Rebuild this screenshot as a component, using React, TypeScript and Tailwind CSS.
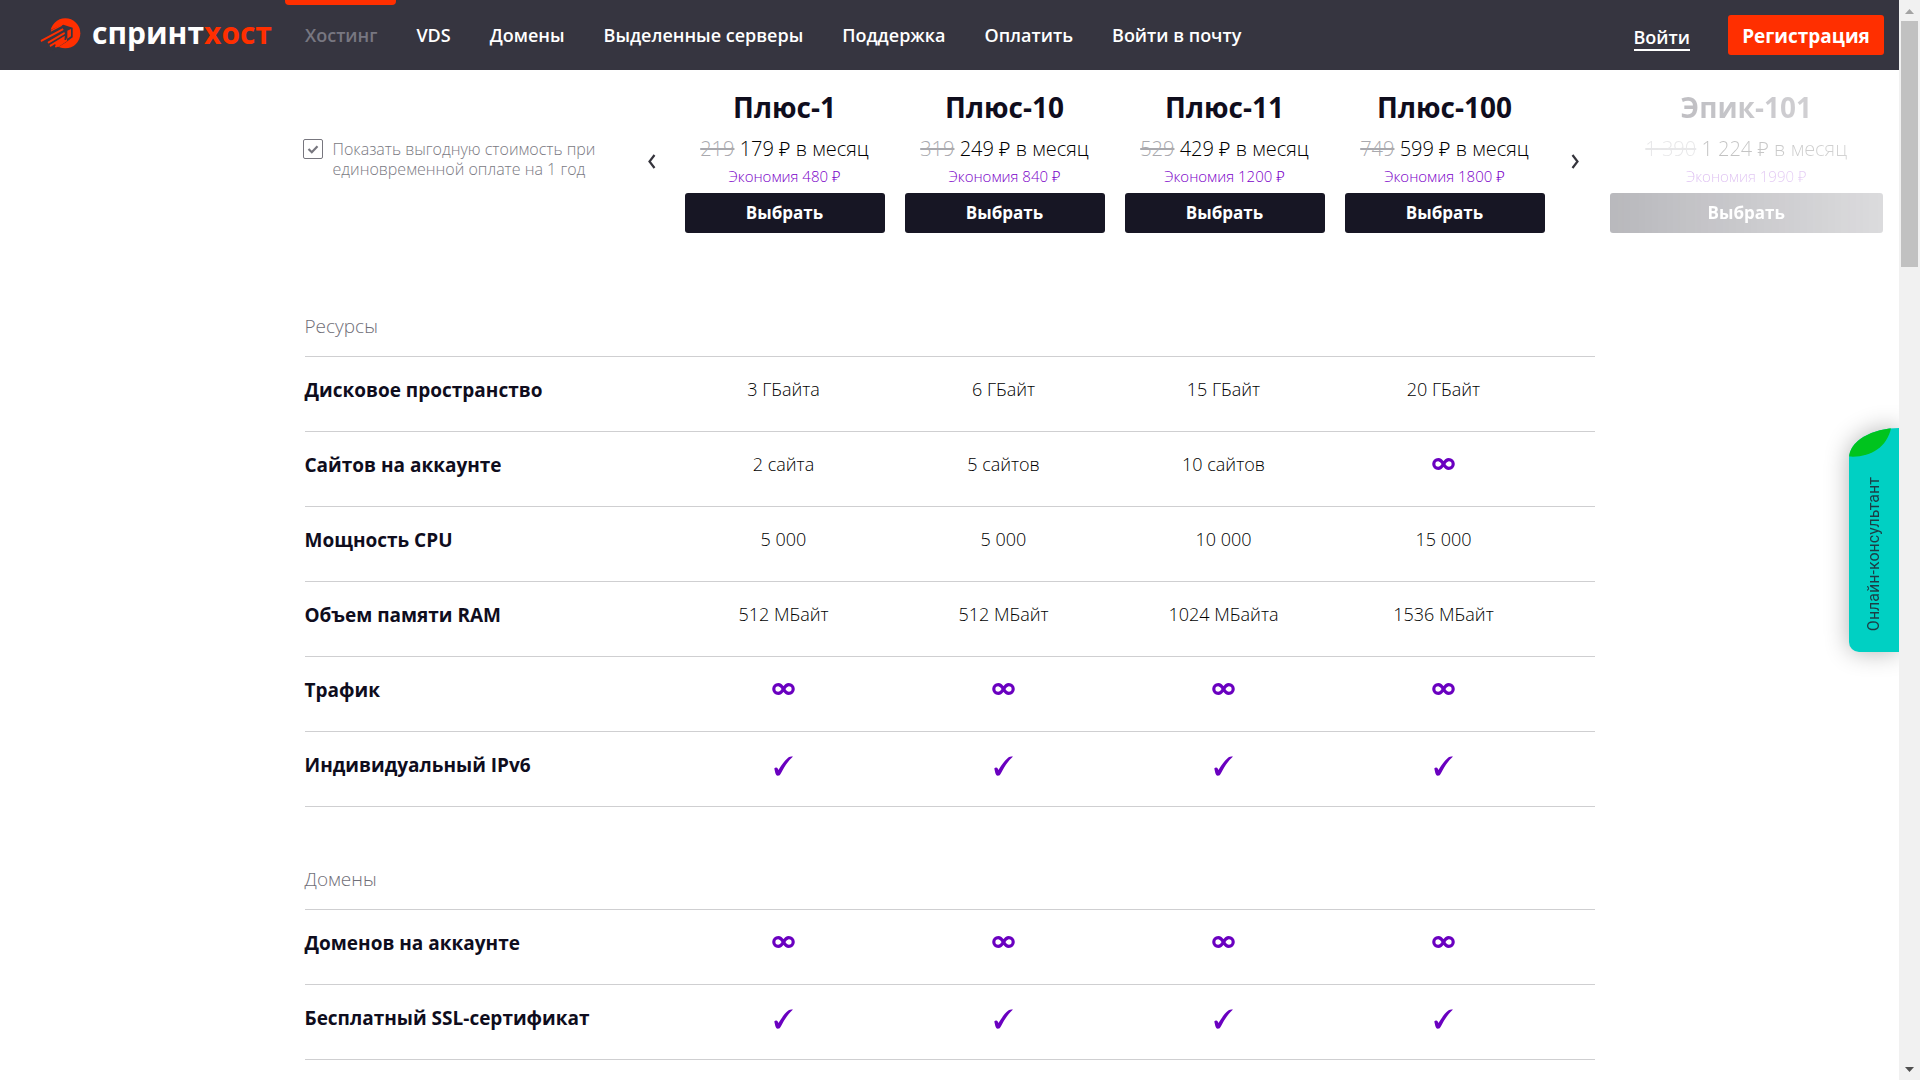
import type { ReactNode } from "react";
import { useState } from "react";

type Plan = {
  name: string;
  oldPrice: string;
  price: string;
  saving: string;
};

type Row = {
  label: string;
  values: string[];
};

type Section = {
  title: string;
  rows: Row[];
};

const navItems = [
  "Хостинг",
  "VDS",
  "Домены",
  "Выделенные серверы",
  "Поддержка",
  "Оплатить",
  "Войти в почту",
];

const plans: Plan[] = [
  { name: "Плюс-1", oldPrice: "219", price: "179", saving: "480" },
  { name: "Плюс-10", oldPrice: "319", price: "249", saving: "840" },
  { name: "Плюс-11", oldPrice: "529", price: "429", saving: "1200" },
  { name: "Плюс-100", oldPrice: "749", price: "599", saving: "1800" },
];

const nextPlan: Plan = { name: "Эпик-101", oldPrice: "1 390", price: "1 224", saving: "1990" };

const infinite = ["inf", "inf", "inf", "inf"];
const included = ["yes", "yes", "yes", "yes"];

const sections: Section[] = [
  {
    title: "Ресурсы",
    rows: [
      { label: "Дисковое пространство", values: ["3 ГБайта", "6 ГБайт", "15 ГБайт", "20 ГБайт"] },
      { label: "Сайтов на аккаунте", values: ["2 сайта", "5 сайтов", "10 сайтов", "inf"] },
      { label: "Мощность CPU", values: ["5 000", "5 000", "10 000", "15 000"] },
      {
        label: "Объем памяти RAM",
        values: ["512 МБайт", "512 МБайт", "1024 МБайта", "1536 МБайт"],
      },
      { label: "Трафик", values: infinite },
      { label: "Индивидуальный IPv6", values: included },
    ],
  },
  {
    title: "Домены",
    rows: [
      { label: "Доменов на аккаунте", values: infinite },
      { label: "Бесплатный SSL-сертификат", values: included },
    ],
  },
];

export default function App() {
  return (
    <div className="flex h-screen overflow-hidden bg-white font-['Open_Sans','Noto_Sans',sans-serif] text-[#0f0d1d]">
      <div className="min-w-0 flex-1 overflow-hidden">
        <Header />
        <main>
          <PlanPicker />
          {sections.map((section) => (
            <FeatureTable key={section.title} section={section} />
          ))}
        </main>
      </div>
      <PageScrollbar />
      <ConsultantTab />
    </div>
  );
}

function Header() {
  return (
    <header className="flex h-[70px] items-start bg-[#363540] text-white">
      <a href="#" className="ml-[38px] flex h-[66px] w-[247px] shrink-0 items-center gap-2">
        <Logo />
        <span className="text-[30px] leading-none font-bold">
          спринт<span className="text-[#ff2f00]">хост</span>
        </span>
      </a>
      <nav className="flex">
        {navItems.map((item, index) => (
          <a
            key={item}
            href="#"
            className={
              index === 0
                ? "relative pt-[21px] pr-[19px] pl-5 text-lg leading-7 font-semibold whitespace-nowrap text-[#787781]"
                : "relative pt-[21px] pr-[19px] pl-5 text-lg leading-7 font-semibold whitespace-nowrap"
            }
          >
            {index === 0 && (
              <span className="absolute inset-x-0 top-0 h-[5px] rounded-b bg-[#ff2f00]" />
            )}
            {item}
          </a>
        ))}
      </nav>
      <div className="mr-[15px] ml-auto flex items-start gap-[38px] pt-[15px]">
        <a href="#" className="mt-[10px] border-b-2 border-white text-lg leading-6 font-semibold">
          Войти
        </a>
        <a
          href="#"
          className="h-10 w-[156px] rounded-[3px] bg-[#ff2f00] text-center text-[19px] leading-[42px] font-bold"
        >
          Регистрация
        </a>
      </div>
    </header>
  );
}

function PlanPicker() {
  const [yearly, setYearly] = useState(true);

  return (
    <section className="grid grid-cols-[1fr_1290px_1fr] pt-[21px]">
      <div />
      <div className="-ml-0.5 flex">
        <label className="mt-12 flex w-[343px] shrink-0 items-start gap-[10px] text-base leading-5 font-light text-[#7a7982]">
          <span className="relative block size-5 shrink-0">
            <input
              type="checkbox"
              checked={yearly}
              onChange={(event) => setYearly(event.target.checked)}
              className="block size-5 appearance-none rounded-[2px] border border-[#77767e]"
            />
            {yearly && (
              <svg viewBox="0 0 20 20" className="pointer-events-none absolute inset-0 size-5">
                <path d="M5.500 10l3.300 3.200 5.700-6" fill="none" stroke="#77767e" strokeWidth="2.200" />
              </svg>
            )}
          </span>
          <span>
            Показать выгодную стоимость при
            <br />
            единовременной оплате на 1 год
          </span>
        </label>
        <ArrowButton label="Предыдущие тарифы">
          <path d="M6.500 1L1.500 7.500l5 6.500" />
        </ArrowButton>
        <div className="ml-[27px] flex gap-5">
          {plans.map((plan) => (
            <div key={plan.name} className="w-[200px]">
              <PlanCard plan={plan} />
            </div>
          ))}
        </div>
        <div className="ml-6">
          <ArrowButton label="Следующие тарифы">
            <path d="M1.500 1l5 6.500-5 6.500" />
          </ArrowButton>
        </div>
      </div>
      <div className="mr-4 ml-[15px] opacity-30 [mask-image:linear-gradient(to_right,black,rgba(0,0,0,0.5))]">
        <PlanCard plan={nextPlan} />
      </div>
    </section>
  );
}

function PlanCard({ plan }: { plan: Plan }) {
  return (
    <div className="text-center whitespace-nowrap">
      <h2 className="text-[28px] leading-8 font-bold">{plan.name}</h2>
      <p className="mt-3 text-[20px] leading-7 font-light text-black">
        <s className="text-[#a9a9ae]">{plan.oldPrice}</s> {plan.price} ₽ в месяц
      </p>
      <p className="text-[15px] leading-[26px] font-light text-[#7a00c8]">
        Экономия {plan.saving} ₽
      </p>
      <button
        type="button"
        className="mt-1 block h-10 w-full rounded-[3px] bg-[#171624] pb-px text-[17px] font-bold text-white"
      >
        Выбрать
      </button>
    </div>
  );
}

function ArrowButton({ label, children }: { label: string; children: ReactNode }) {
  return (
    <button type="button" aria-label={label} className="mt-[63px] block h-[15px] w-3 shrink-0">
      <svg
        viewBox="0 0 8 15"
        className="mx-auto h-[15px] w-2"
        fill="none"
        stroke="#35343c"
        strokeWidth="2.200"
      >
        {children}
      </svg>
    </button>
  );
}

function FeatureTable({ section }: { section: Section }) {
  return (
    <table className="mx-auto w-[1290px] table-fixed border-collapse first-of-type:mt-[77px] not-first-of-type:mt-14">
      <colgroup>
        <col className="w-[369px]" />
        <col className="w-[220px]" />
        <col className="w-[220px]" />
        <col className="w-[220px]" />
        <col className="w-[220px]" />
        <col />
      </colgroup>
      <thead>
        <tr className="h-[46px] border-b border-[#cfcfd1]">
          <th
            colSpan={6}
            className="pb-[14px] text-left align-bottom text-[19px] leading-8 font-light text-[#6f6e77]"
          >
            {section.title}
          </th>
        </tr>
      </thead>
      <tbody>
        {section.rows.map((row) => (
          <tr key={row.label} className="h-[75px] border-b border-[#cfcfd1]">
            <th className="pb-2 text-left text-[19px] leading-7 font-bold">{row.label}</th>
            {row.values.map((value, index) => (
              <td
                key={index}
                className="pb-[10px] text-center text-lg leading-7 font-light text-black"
              >
                <Value value={value} />
              </td>
            ))}
            <td />
          </tr>
        ))}
      </tbody>
    </table>
  );
}

function Value({ value }: { value: string }) {
  if (value === "inf") {
    return (
      <svg viewBox="0 0 24 14" className="mx-auto h-[14px] w-6" aria-label="Без ограничений">
        <path
          d="M11.500 7C9.900 4.100 8.500 2.600 6.200 2.600A4.400 4.400 0 0 0 6.200 11.400C8.500 11.400 9.900 9.900 11.500 7S14.500 2.600 16.800 2.600A4.400 4.400 0 0 1 16.800 11.400C14.500 11.400 13.100 9.900 11.500 7Z"
          fill="none"
          stroke="#6a00c0"
          strokeWidth="3.200"
        />
      </svg>
    );
  }
  if (value === "yes") {
    return (
      <svg viewBox="0 0 20 20" className="mx-auto mt-1 size-5" aria-label="Включено">
        <path
          d="M.3 12.400C1 11.200 3.100 11 3.600 12.300L4.400 14.100C7.500 9 10.500 4.600 14.300 1.600C15.500 .7 17.100 .4 19 .5C14 5 10.500 10.500 7 17.300C6.100 19 5.400 19.800 3.800 19.800C2.300 19.800 1.700 18.600 1.200 16.600Z"
          fill="#6a00c0"
        />
      </svg>
    );
  }
  return <>{value}</>;
}

function Logo() {
  return (
    <svg viewBox="0 0 138 108" className="h-9 w-[46px]">
      <circle cx="82" cy="55" r="45" fill="#ff2f00" />
      <path d="M30 48L76 29L104 38V67L84 82L46 106L8 98V68Z" fill="#363540" />
      <path d="M49 85L82 63L88 78L60 97A45 45 0 0 1 49 85Z" fill="#ff2f00" />
      <path d="M40 45L76 26L70 34L38 50Z" fill="#ff2f00" />
      <g stroke="#ff2f00" strokeWidth="6" strokeLinecap="round">
        <path d="M11 77L74 43" />
        <path d="M32 82L78 55" />
        <path d="M38 92L80 66" />
        <path d="M54 94L84 74" />
      </g>
      <path d="M76 38L84 47L82 75" fill="none" stroke="#363540" strokeWidth="5" />
      <path d="M88 47L99 42V64L88 71Z" fill="#ff2f00" />
    </svg>
  );
}

function PageScrollbar() {
  return (
    <div className="flex w-[21px] shrink-0 flex-col items-center bg-[#f1f1f1]">
      <svg viewBox="0 0 21 21" className="size-[21px]">
        <path d="M6 14l4.500-5 4.500 5z" fill="#a3a3a3" />
      </svg>
      <div className="h-[246px] w-[17px] bg-[#c1c1c1]" />
      <svg viewBox="0 0 21 21" className="mt-auto size-[21px]">
        <path d="M6 8l4.500 5 4.500-5z" fill="#505050" />
      </svg>
    </div>
  );
}

function ConsultantTab() {
  return (
    <div className="fixed top-[428px] right-[21px] -my-10 overflow-hidden py-10 pl-10">
      <button
        type="button"
        className="relative flex h-[224px] w-[50px] items-center justify-center overflow-hidden rounded-tl-[50px_30px] rounded-bl-[10px] bg-[#00d0c3] pt-[29px] shadow-[0_0_24px_rgba(0,0,0,0.3)]"
      >
        <svg viewBox="0 0 50 30" className="absolute top-0 left-0 h-[30px] w-[50px]">
          <path d="M0 0H42C38 20 20 30 0 28.500Z" fill="#00c41e" />
        </svg>
        <span className="rotate-180 font-[Roboto,sans-serif] text-base leading-5 whitespace-nowrap text-[#1d3d45] [writing-mode:vertical-rl]">
          Онлайн-консультант
        </span>
      </button>
    </div>
  );
}
